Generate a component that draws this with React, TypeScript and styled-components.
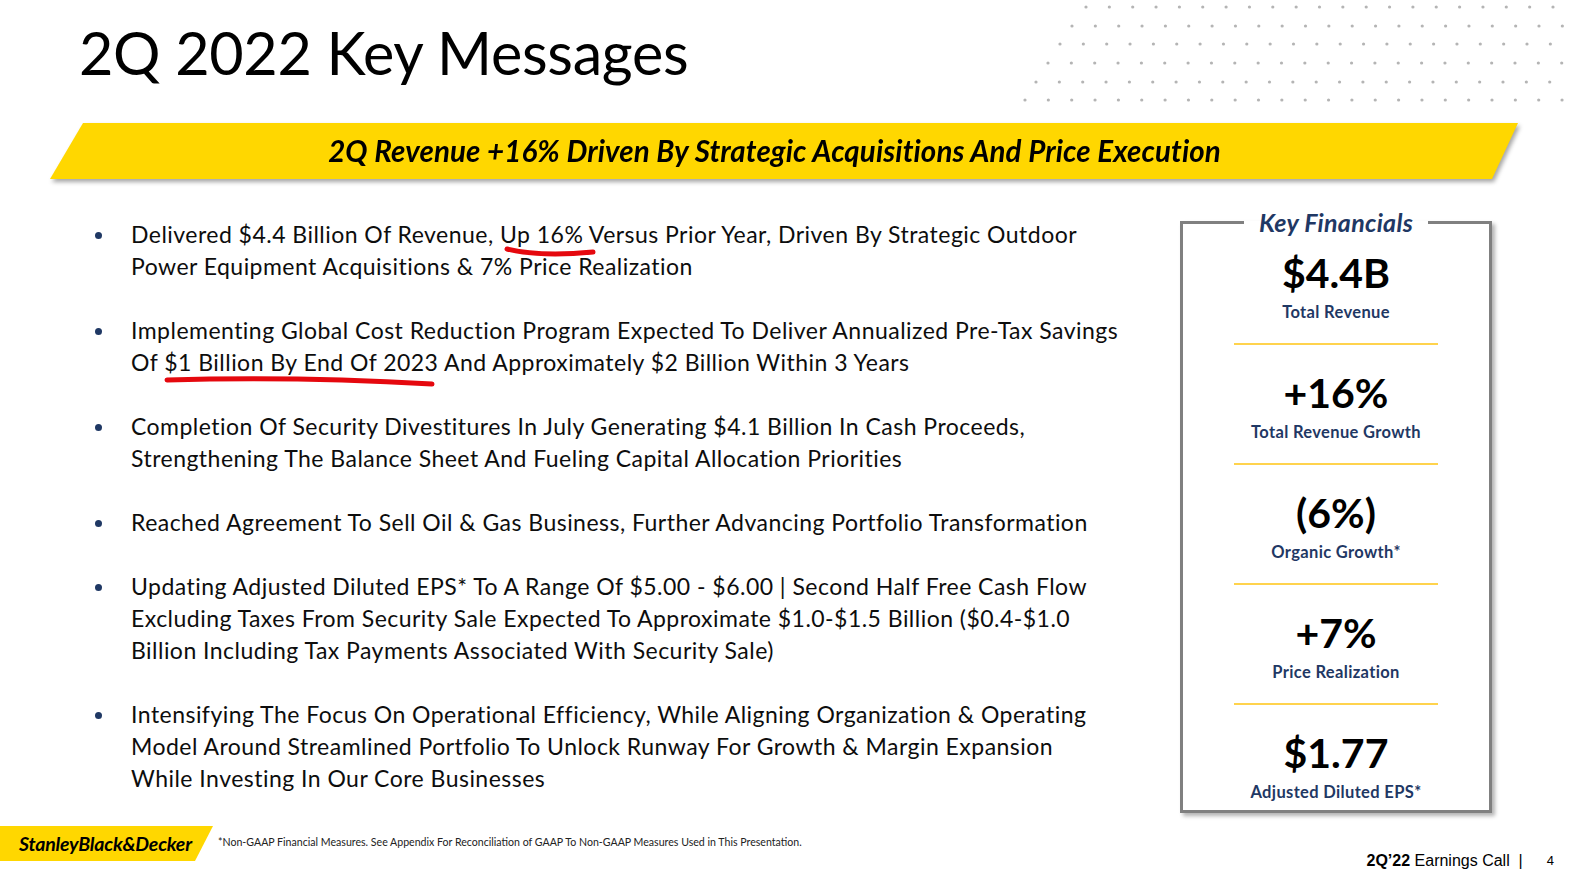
import React from "react";
import styled, { createGlobalStyle } from "styled-components";

const GlobalStyle = createGlobalStyle`
  html, body {
    margin: 0;
    padding: 0;
    background: #fff;
  }
  body {
    font-family: Lato, "Open Sans", "Liberation Sans", sans-serif;
    color: #000;
  }
`;

const NAVY = "#1f3864";
const YELLOW = "#ffd700";

const Slide = styled.div`
  width: 1572px;
  height: 872px;
  display: flex;
  flex-direction: column;
  overflow: hidden;
  background: #fff;
`;

const Header = styled.header`
  height: 123px;
  flex: none;
  display: flex;
  align-items: flex-start;
`;

const Title = styled.h1`
  margin: 23px 0 0 79px;
  font-size: 59.3px;
  font-weight: 400;
  line-height: 1;
  letter-spacing: -0.3px;
  white-space: nowrap;
`;

const Dots = styled.svg`
  margin-left: auto;
  flex: none;
`;

const BannerShadow = styled.div`
  flex: none;
  margin-left: 50px;
  width: 1468px;
  filter: drop-shadow(2px 3px 2px rgba(0, 0, 0, 0.35));
`;

const Banner = styled.div`
  height: 54px;
  background: ${YELLOW};
  clip-path: polygon(33px 0, 100% 0, calc(100% - 26px) 100%, 0 100%);
  display: flex;
  align-items: center;
  justify-content: center;
  padding: 0 19px 2px 0;
  font-size: 29.5px;
  font-weight: 700;
  font-style: italic;
  letter-spacing: 0.1px;
`;

const Main = styled.main`
  height: 633px;
  flex: none;
  display: flex;
  align-items: flex-start;
`;

const Bullets = styled.ul`
  list-style: none;
  margin: 39px 0 0 0;
  padding: 0 0 0 93px;
  flex: none;
  display: flex;
  flex-direction: column;
  gap: 32px;
`;

const Bullet = styled.li`
  display: flex;
  align-items: flex-start;
  font-size: 23px;
  line-height: 32px;
  letter-spacing: 0.47px;
  white-space: nowrap;
  color: #0d0d0d;
`;

const Dot = styled.span`
  flex: none;
  width: 7px;
  height: 7px;
  border-radius: 50%;
  background: ${NAVY};
  margin: 14px 29px 0 2px;
`;

const Marked = styled.span`
  position: relative;
`;

const Stroke = styled.svg`
  position: absolute;
  left: 0;
  overflow: visible;
  pointer-events: none;
`;

const Box = styled.fieldset`
  flex: none;
  box-sizing: border-box;
  width: 312px;
  margin: 28px 80px 0 auto;
  padding: 0 0 7px;
  border: 3px solid #808080;
  box-shadow: 3px 3px 4px rgba(0, 0, 0, 0.3);
  display: flex;
  flex-direction: column;
  align-items: center;
`;

const Legend = styled.legend`
  margin: 0 auto;
  padding: 0 15px;
  font-size: 25px;
  line-height: 30px;
  font-weight: 700;
  font-style: italic;
  letter-spacing: 0.3px;
  color: ${NAVY};
`;

const Stat = styled.div`
  display: flex;
  flex-direction: column;
  align-items: center;
  margin-top: 12px;
`;

const Value = styled.div`
  font-size: 41px;
  line-height: 48px;
  font-weight: 700;
  color: #000;
`;

const Label = styled.div`
  margin-top: 4px;
  font-size: 16.5px;
  line-height: 22px;
  font-weight: 700;
  letter-spacing: 0.35px;
  color: ${NAVY};
`;

const Divider = styled.hr`
  width: 204px;
  height: 2px;
  margin: 20px 0 12px;
  border: 0;
  background: #ffd34d;
`;

const Footer = styled.footer`
  flex: 1;
  display: flex;
  align-items: flex-start;
  padding-top: 14px;
`;

const Logo = styled.div`
  width: 213px;
  height: 35px;
  background: ${YELLOW};
  clip-path: polygon(0 0, 100% 0, calc(100% - 18px) 100%, 0 100%);
  display: flex;
  align-items: center;
  padding-left: 19px;
  box-sizing: border-box;
  font-size: 19.5px;
  font-weight: 700;
  font-style: italic;
  letter-spacing: -0.2px;
  white-space: nowrap;
`;

const Note = styled.p`
  margin: 10px 0 0 5px;
  font-size: 10.6px;
  line-height: 12px;
  color: #222;
  white-space: nowrap;
`;

const Call = styled.div`
  margin: 25px 0 0 auto;
  display: flex;
  align-items: center;
  font-family: "Liberation Sans", Arial, sans-serif;
  font-size: 16px;
  line-height: 20px;
  white-space: nowrap;
`;

const PageNo = styled.span`
  margin: 0 18px 0 24px;
  font-size: 13px;
`;

function DotGrid() {
  const rows = [
    { y: 7, x: 66 },
    { y: 26, x: 52 },
    { y: 44, x: 40 },
    { y: 63, x: 28 },
    { y: 82, x: 16 },
    { y: 100, x: 5 },
  ];
  const dots: React.ReactElement[] = [];
  rows.forEach((r, i) => {
    for (let x = r.x; x < 552; x += 23.35) {
      dots.push(<circle key={`${i}-${x}`} cx={x} cy={r.y} r={1.6} fill="#b4b4b4" />);
    }
  });
  return (
    <Dots width={552} height={108} viewBox="0 0 552 108">
      {dots}
    </Dots>
  );
}

function Underline({
  width,
  top,
  d,
  children,
}: {
  width: number;
  top: number;
  d: string;
  children: React.ReactNode;
}) {
  return (
    <Marked>
      {children}
      <Stroke width={width} height={16} style={{ top }} viewBox={`0 0 ${width} 16`}>
        <path d={d} stroke="#e5080e" strokeWidth={5} strokeLinecap="round" fill="none" />
      </Stroke>
    </Marked>
  );
}

const stats = [
  { value: "$4.4B", label: "Total Revenue" },
  { value: "+16%", label: "Total Revenue Growth" },
  { value: "(6%)", label: "Organic Growth*" },
  { value: "+7%", label: "Price Realization" },
  { value: "$1.77", label: "Adjusted Diluted EPS*" },
];

export default function App() {
  return (
    <>
      <GlobalStyle />
      <Slide>
        <Header>
          <Title>2Q 2022 Key Messages</Title>
          <DotGrid />
        </Header>

        <BannerShadow>
          <Banner>2Q Revenue +16% Driven By Strategic Acquisitions And Price Execution</Banner>
        </BannerShadow>

        <Main>
          <Bullets>
            <Bullet>
              <Dot />
              <div>
                Delivered $4.4 Billion Of Revenue,{" "}
                <Underline width={96} top={24} d="M7 5 Q 40 13 93 8">
                  Up 16%
                </Underline>{" "}
                Versus Prior Year, Driven By Strategic Outdoor
                <br />
                Power Equipment Acquisitions &amp; 7% Price Realization
              </div>
            </Bullet>
            <Bullet>
              <Dot />
              <div>
                Implementing Global Cost Reduction Program Expected To Deliver Annualized Pre-Tax Savings
                <br />
                Of{" "}
                <Underline width={272} top={26} d="M3 6 Q 130 2 268 10">
                  $1 Billion By End Of 2023
                </Underline>{" "}
                And Approximately $2 Billion Within 3 Years
              </div>
            </Bullet>
            <Bullet>
              <Dot />
              <div>
                Completion Of Security Divestitures In July Generating $4.1 Billion In Cash Proceeds,
                <br />
                Strengthening The Balance Sheet And Fueling Capital Allocation Priorities
              </div>
            </Bullet>
            <Bullet>
              <Dot />
              <div>Reached Agreement To Sell Oil &amp; Gas Business, Further Advancing Portfolio Transformation</div>
            </Bullet>
            <Bullet>
              <Dot />
              <div>
                Updating Adjusted Diluted EPS* To A Range Of $5.00 - $6.00 | Second Half Free Cash Flow
                <br />
                Excluding Taxes From Security Sale Expected To Approximate $1.0-$1.5 Billion ($0.4-$1.0
                <br />
                Billion Including Tax Payments Associated With Security Sale)
              </div>
            </Bullet>
            <Bullet>
              <Dot />
              <div>
                Intensifying The Focus On Operational Efficiency, While Aligning Organization &amp; Operating
                <br />
                Model Around Streamlined Portfolio To Unlock Runway For Growth &amp; Margin Expansion
                <br />
                While Investing In Our Core Businesses
              </div>
            </Bullet>
          </Bullets>

          <Box>
            <Legend>Key Financials</Legend>
            {stats.map((s, i) => (
              <React.Fragment key={s.label}>
                <Stat>
                  <Value>{s.value}</Value>
                  <Label>{s.label}</Label>
                </Stat>
                {i < stats.length - 1 && <Divider />}
              </React.Fragment>
            ))}
          </Box>
        </Main>

        <Footer>
          <Logo>StanleyBlack&amp;Decker</Logo>
          <Note>
            *Non-GAAP Financial Measures. See Appendix For Reconciliation of GAAP To Non-GAAP Measures Used in This
            Presentation.
          </Note>
          <Call>
            <b>2Q’22</b>&nbsp;Earnings Call&nbsp;&nbsp;|
            <PageNo>4</PageNo>
          </Call>
        </Footer>
      </Slide>
    </>
  );
}
